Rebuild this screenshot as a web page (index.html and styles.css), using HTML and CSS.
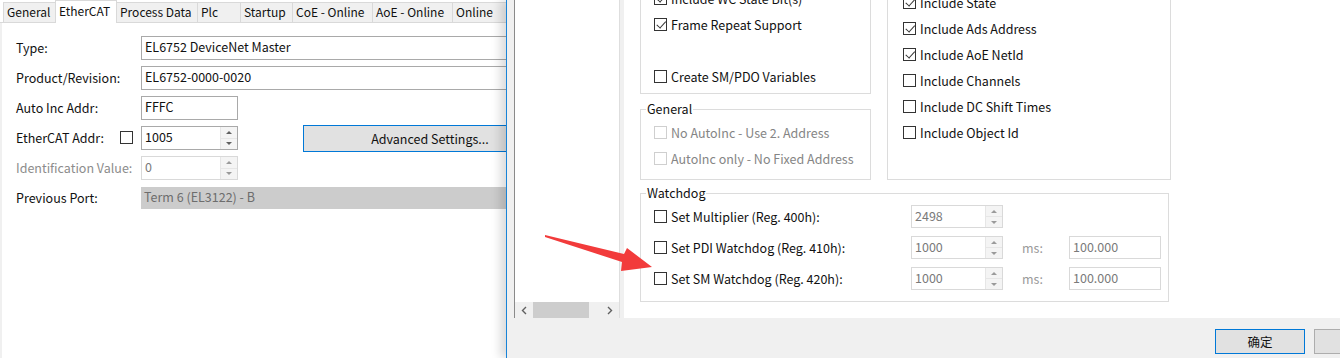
FILE: index.html
```html
<!DOCTYPE html>
<html lang="en">
<head>
  <meta charset="UTF-8">
  <title>EtherCAT - Advanced Settings</title>
  <link rel="stylesheet" href="styles.css">
</head>
<body>
  <div class="screen">
    <section class="device">
      <nav class="tabs">
        <span class="tab">General</span>
        <span class="tab active">EtherCAT</span>
        <span class="tab">Process Data</span>
        <span class="tab">Plc</span>
        <span class="tab">Startup</span>
        <span class="tab">CoE - Online</span>
        <span class="tab">AoE - Online</span>
        <span class="tab">Online</span>
      </nav>
      <div class="page">
        <div class="row">
          <label class="lbl">Type:</label>
          <div class="field wide">EL6752 DeviceNet Master</div>
        </div>
        <div class="row">
          <label class="lbl">Product/Revision:</label>
          <div class="field wide">EL6752-0000-0020</div>
        </div>
        <div class="row">
          <label class="lbl">Auto Inc Addr:</label>
          <div class="field short">FFFC</div>
        </div>
        <div class="row">
          <label class="lbl">EtherCAT Addr: <span class="box"></span></label>
          <div class="spin short">
            <span class="val">1005</span>
            <span class="btns"><i class="up"></i><i class="down"></i></span>
          </div>
          <button class="adv">Advanced Settings...</button>
        </div>
        <div class="row">
          <label class="lbl off">Identification Value:</label>
          <div class="spin short off">
            <span class="val">0</span>
            <span class="btns"><i class="up"></i><i class="down"></i></span>
          </div>
        </div>
        <div class="row">
          <label class="lbl">Previous Port:</label>
          <div class="field port">Term 6 (EL3122) - B</div>
        </div>
      </div>
    </section>

    <section class="dialog">
      <div class="dlg-main">
        <div class="tree">
          <div class="hscroll">
            <span class="sbtn"><svg width="6" height="9" viewBox="0 0 6 9"><path d="M5 1 L1.5 4.5 L5 8" fill="none" stroke="#606060" stroke-width="1.4"/></svg></span>
            <span class="thumb"></span>
            <span class="gap"></span>
            <span class="sbtn"><svg width="6" height="9" viewBox="0 0 6 9"><path d="M1 1 L4.5 4.5 L1 8" fill="none" stroke="#606060" stroke-width="1.4"/></svg></span>
          </div>
        </div>
        <div class="pane">
          <div class="cols">
            <div class="col-left">
              <div class="group g-image">
                <div class="check"><span class="box on"></span>Include WC State Bit(s)</div>
                <div class="check"><span class="box on"></span>Frame Repeat Support</div>
                <div class="check blank"></div>
                <div class="check"><span class="box"></span>Create SM/PDO Variables</div>
              </div>
              <fieldset class="group g-general">
                <legend>General</legend>
                <div class="check off"><span class="box"></span>No AutoInc - Use 2. Address</div>
                <div class="check off"><span class="box"></span>AutoInc only - No Fixed Address</div>
              </fieldset>
            </div>
            <div class="group g-include">
              <div class="check"><span class="box on"></span>Include State</div>
              <div class="check"><span class="box on"></span>Include Ads Address</div>
              <div class="check"><span class="box on"></span>Include AoE NetId</div>
              <div class="check"><span class="box"></span>Include Channels</div>
              <div class="check"><span class="box"></span>Include DC Shift Times</div>
              <div class="check"><span class="box"></span>Include Object Id</div>
            </div>
          </div>
          <fieldset class="group watchdog">
            <legend>Watchdog</legend>
            <div class="wd-row">
              <div class="check"><span class="box"></span>Set Multiplier (Reg. 400h):</div>
              <div class="spin wd off">
                <span class="val">2498</span>
                <span class="btns"><i class="up"></i><i class="down"></i></span>
              </div>
            </div>
            <div class="wd-row">
              <div class="check"><span class="box"></span>Set PDI Watchdog (Reg. 410h):</div>
              <div class="spin wd off">
                <span class="val">1000</span>
                <span class="btns"><i class="up"></i><i class="down"></i></span>
              </div>
              <span class="unit">ms:</span>
              <div class="field wd off">100.000</div>
            </div>
            <div class="wd-row">
              <div class="check"><span class="box"></span>Set SM Watchdog (Reg. 420h):</div>
              <div class="spin wd off">
                <span class="val">1000</span>
                <span class="btns"><i class="up"></i><i class="down"></i></span>
              </div>
              <span class="unit">ms:</span>
              <div class="field wd off">100.000</div>
            </div>
          </fieldset>
        </div>
      </div>
      <div class="dlg-buttons">
        <button class="btn default">确定</button>
        <button class="btn">取消</button>
      </div>
    </section>

    <svg class="arrow" width="1340" height="358" viewBox="0 0 1340 358">
      <polygon points="545,235 624,254 627,248 652,267 621,271 622,262 545,237" fill="#f23b3b"/>
    </svg>
  </div>
</body>
</html>
```

FILE: styles.css
```css
* {
  box-sizing: border-box;
}
body {
  margin: 0;
  font-family: "Noto Sans CJK SC", "Microsoft YaHei", sans-serif;
  font-size: 12.5px;
  color: #111;
  background: #fff;
  overflow: hidden;
}
.screen {
  display: flex;
  width: 1340px;
  height: 358px;
  position: relative;
  overflow: hidden;
}

/* left: EtherCAT page */
.device {
  width: 506px;
  flex: none;
  overflow: hidden;
  display: flex;
  flex-direction: column;
  background: #fff;
}
.tabs {
  height: 23px;
  display: flex;
  align-items: flex-end;
  padding-left: 3px;
  border-bottom: 1px solid #d9d9d9;
  white-space: nowrap;
  font-size: 12px;
}
.tab {
  flex: none;
  height: 20px;
  line-height: 18px;
  padding-left: 3px;
  overflow: hidden;
  border: 1px solid #d9d9d9;
  border-right: none;
  border-bottom: none;
  background: #f0f0f0;
}
.tab:nth-child(1) { width: 52px; }
.tab:nth-child(2) { width: 62px; }
.tab:nth-child(3) { width: 80px; }
.tab:nth-child(4) { width: 43px; }
.tab:nth-child(5) { width: 52px; }
.tab:nth-child(6) { width: 80px; }
.tab:nth-child(7) { width: 80px; }
.tab:nth-child(8) { width: 60px; border-right: 1px solid #d9d9d9; }
.tab.active {
  height: 23px;
  margin-bottom: -1px;
  line-height: 20px;
  background: #fff;
  border-right: 1px solid #d9d9d9;
}
.tab.active + .tab {
  border-left: none;
}
.page {
  flex: 1;
  border-left: 2px solid #f0f0f0;
  padding: 13px 0 0 14px;
  display: flex;
  flex-direction: column;
  gap: 6px;
}
.row {
  height: 24px;
  display: flex;
  align-items: center;
  white-space: nowrap;
}
.lbl {
  width: 125px;
  flex: none;
  display: flex;
  align-items: center;
  justify-content: space-between;
  padding: 0 8px 2px 0;
}
.lbl.off {
  color: #8c8c8c;
}
.field {
  height: 24px;
  border: 1px solid #a9a9a9;
  padding: 0 3px;
  line-height: 20px;
  background: #fff;
  flex: none;
}
.field.wide {
  width: 420px;
}
.field.short {
  width: 97px;
}
.field.port {
  width: 380px;
  height: 22px;
  border: none;
  background: #cccccc;
  color: #6d6d6d;
  padding-left: 3px;
}
.spin {
  height: 24px;
  display: flex;
  border: 1px solid #a9a9a9;
  background: #fff;
  flex: none;
}
.spin.short {
  width: 97px;
}
.spin .val {
  flex: 1;
  padding: 0 3px;
  line-height: 20px;
}
.spin .btns {
  width: 17px;
  display: flex;
  flex-direction: column;
  border-left: 1px solid #e6e6e6;
}
.spin .btns i {
  flex: 1;
  display: flex;
  align-items: center;
  justify-content: center;
  background: #f4f4f4;
}
.spin .btns i + i {
  border-top: 1px solid #e6e6e6;
}
.spin .up::before,
.spin .down::before {
  content: "";
  border-left: 3.5px solid transparent;
  border-right: 3.5px solid transparent;
}
.spin .up::before {
  border-bottom: 3px solid #606060;
}
.spin .down::before {
  border-top: 3px solid #606060;
}
.spin.off,
.field.off {
  border-color: #d9d9d9;
  color: #7a7a7a;
}
.spin.off .up::before {
  border-bottom-color: #9a9a9a;
}
.spin.off .down::before {
  border-top-color: #9a9a9a;
}
.adv {
  flex: none;
  margin-left: 65px;
  width: 254px;
  height: 27px;
  padding: 0;
  border: 1px solid #0078d7;
  background: #e1e1e1;
  font: inherit;
  color: #111;
  text-align: center;
}

/* checkboxes */
.box {
  position: relative;
  width: 13px;
  height: 13px;
  flex: none;
  border: 1px solid #333;
  background: #fff;
}
.box.on::after {
  content: "";
  position: absolute;
  left: 3.5px;
  top: 0.5px;
  width: 3.5px;
  height: 7.5px;
  border-right: 1.2px solid #333;
  border-bottom: 1.2px solid #333;
  transform: rotate(42deg);
}
.check {
  height: 26px;
  display: flex;
  align-items: center;
  gap: 4px;
  padding-bottom: 2px;
  white-space: nowrap;
}
.check.off {
  color: #858585;
}
.check.off .box {
  border-color: #cfcfcf;
}

/* right: advanced settings dialog */
.dialog {
  position: relative;
  z-index: 1;
  width: 834px;
  flex: none;
  display: flex;
  flex-direction: column;
  overflow: hidden;
  border-left: 1px solid #1883d7;
  background: #f0f0f0;
  box-shadow: -6px 0 9px rgba(0, 0, 0, 0.14);
}
.dlg-main {
  height: 318px;
  display: flex;
  padding-left: 7px;
}
.tree {
  width: 106px;
  flex: none;
  margin-right: 4px;
  display: flex;
  flex-direction: column;
  justify-content: flex-end;
  background: #fff;
  border-left: 1px solid #8a8a8a;
  border-right: 1px solid #dedede;
}
.hscroll {
  height: 16px;
  display: flex;
  align-items: center;
  background: #f0f0f0;
}
.sbtn {
  width: 18px;
  height: 16px;
  display: flex;
  align-items: center;
  justify-content: center;
}
.thumb {
  width: 56px;
  height: 16px;
  background: #cdcdcd;
}
.hscroll .gap {
  flex: 1;
}
.pane {
  flex: 1;
  background: #fff;
  padding-left: 16px;
  overflow: hidden;
}
.cols {
  display: flex;
  gap: 16px;
  margin-top: -40px;
}
.col-left {
  width: 231px;
  display: flex;
  flex-direction: column;
}
.group {
  border: 1px solid #dcdcdc;
  margin: 0;
  min-width: 0;
}
.g-image {
  padding: 25px 0 3px 13px;
}
.g-general {
  margin-top: 6px;
  padding: 2px 0 7px 13px;
}
.group legend {
  margin-left: -8px;
  padding: 0 1px;
  line-height: 18px;
}
.g-include {
  width: 284px;
  padding: 29px 0 0 15px;
}
.watchdog {
  width: 529px;
  margin-top: 4px;
  padding: 3px 0 11px 13px;
  display: flex;
  flex-direction: column;
  gap: 8px;
}
.wd-row {
  height: 23px;
  display: flex;
  align-items: center;
}
.wd-row .check {
  width: 257px;
  height: 23px;
  flex: none;
  padding-bottom: 0;
}
.spin.wd,
.field.wd {
  width: 92px;
  height: 23px;
}
.field.wd {
  line-height: 19px;
}
.spin.wd .val {
  line-height: 19px;
}
.unit {
  width: 47px;
  margin-left: 19px;
  color: #9a9a9a;
}
.dlg-buttons {
  flex: 1;
  display: flex;
  align-items: flex-start;
  gap: 9px;
  padding: 11px 0 0 708px;
}
.btn {
  flex: none;
  width: 90px;
  height: 25px;
  border: 1px solid #adadad;
  background: #e1e1e1;
  font: inherit;
  color: #111;
}
.btn.default {
  border-color: #0078d7;
}
.arrow {
  position: absolute;
  z-index: 2;
  left: 0;
  top: 0;
  pointer-events: none;
}
```
